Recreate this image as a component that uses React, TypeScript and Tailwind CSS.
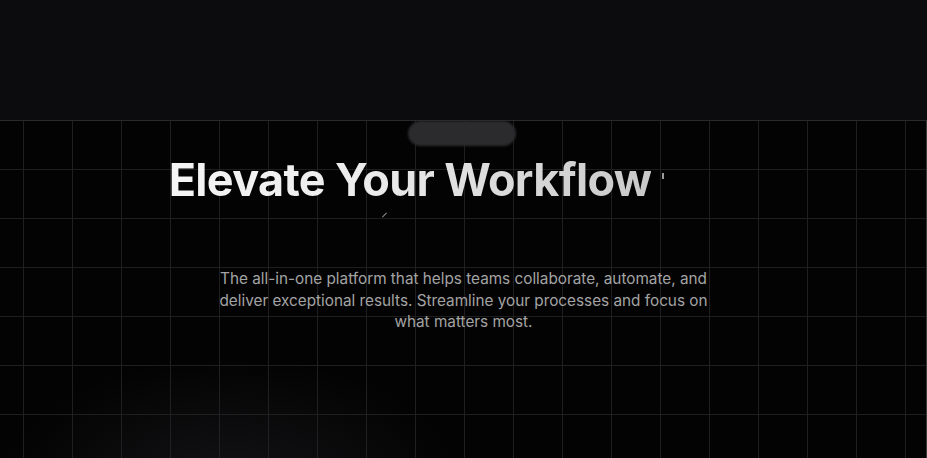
import React from "react";

export default function App() {
  return (
    <div className="flex h-[458px] w-full flex-col overflow-hidden bg-black font-['Inter',sans-serif]">
      <header className="h-[121px] shrink-0 border-b border-[#2a2a2d] bg-[#0c0c0f]" />
      <section className="relative flex-1 overflow-hidden bg-[#030303]">
        <div className="pointer-events-none absolute inset-0 bg-[linear-gradient(to_right,#1f1f21_1px,transparent_1px),linear-gradient(to_bottom,#1e1e20_1px,transparent_1px)] bg-[size:49px_49px] bg-[position:23px_-1px]" />
        <div className="pointer-events-none absolute -bottom-40 left-0 h-[260px] w-[460px] rounded-full bg-[radial-gradient(closest-side,rgba(36,36,42,0.5),transparent)]" />
        <div className="pointer-events-none absolute right-0 top-0 h-full w-px bg-[#3a3a3c]" />
        <div className="relative flex flex-col items-center">
          <div className="ml-[-4px] h-[25px] w-[108px] rounded-full bg-[#2b2b2e] blur-[1px]" />
          <div className="relative mt-[10px] flex items-start">
            <h1 className="bg-[linear-gradient(to_right,#f5f5f5,#ececec_40%,#c9c9c9)] bg-clip-text text-[45px] font-bold leading-[48px] tracking-[-0.015em] text-transparent">
              Elevate Your Workflow
            </h1>
            <div className="ml-[11px] mt-[17px] h-[6px] w-[2px] bg-[#9a9a9a]" />
            <div className="w-[94px]" />
            <div className="absolute left-[215px] top-[56px] h-[6px] w-px rotate-45 bg-[#8a8a8a]" />
          </div>
          <p className="mt-[64px] max-w-[500px] text-center text-[15.3px] leading-[21.5px] text-[#a3a3a3]">
            The all-in-one platform that helps teams collaborate, automate, and deliver exceptional results. Streamline your processes and focus on what matters most.
          </p>
        </div>
      </section>
    </div>
  );
}
